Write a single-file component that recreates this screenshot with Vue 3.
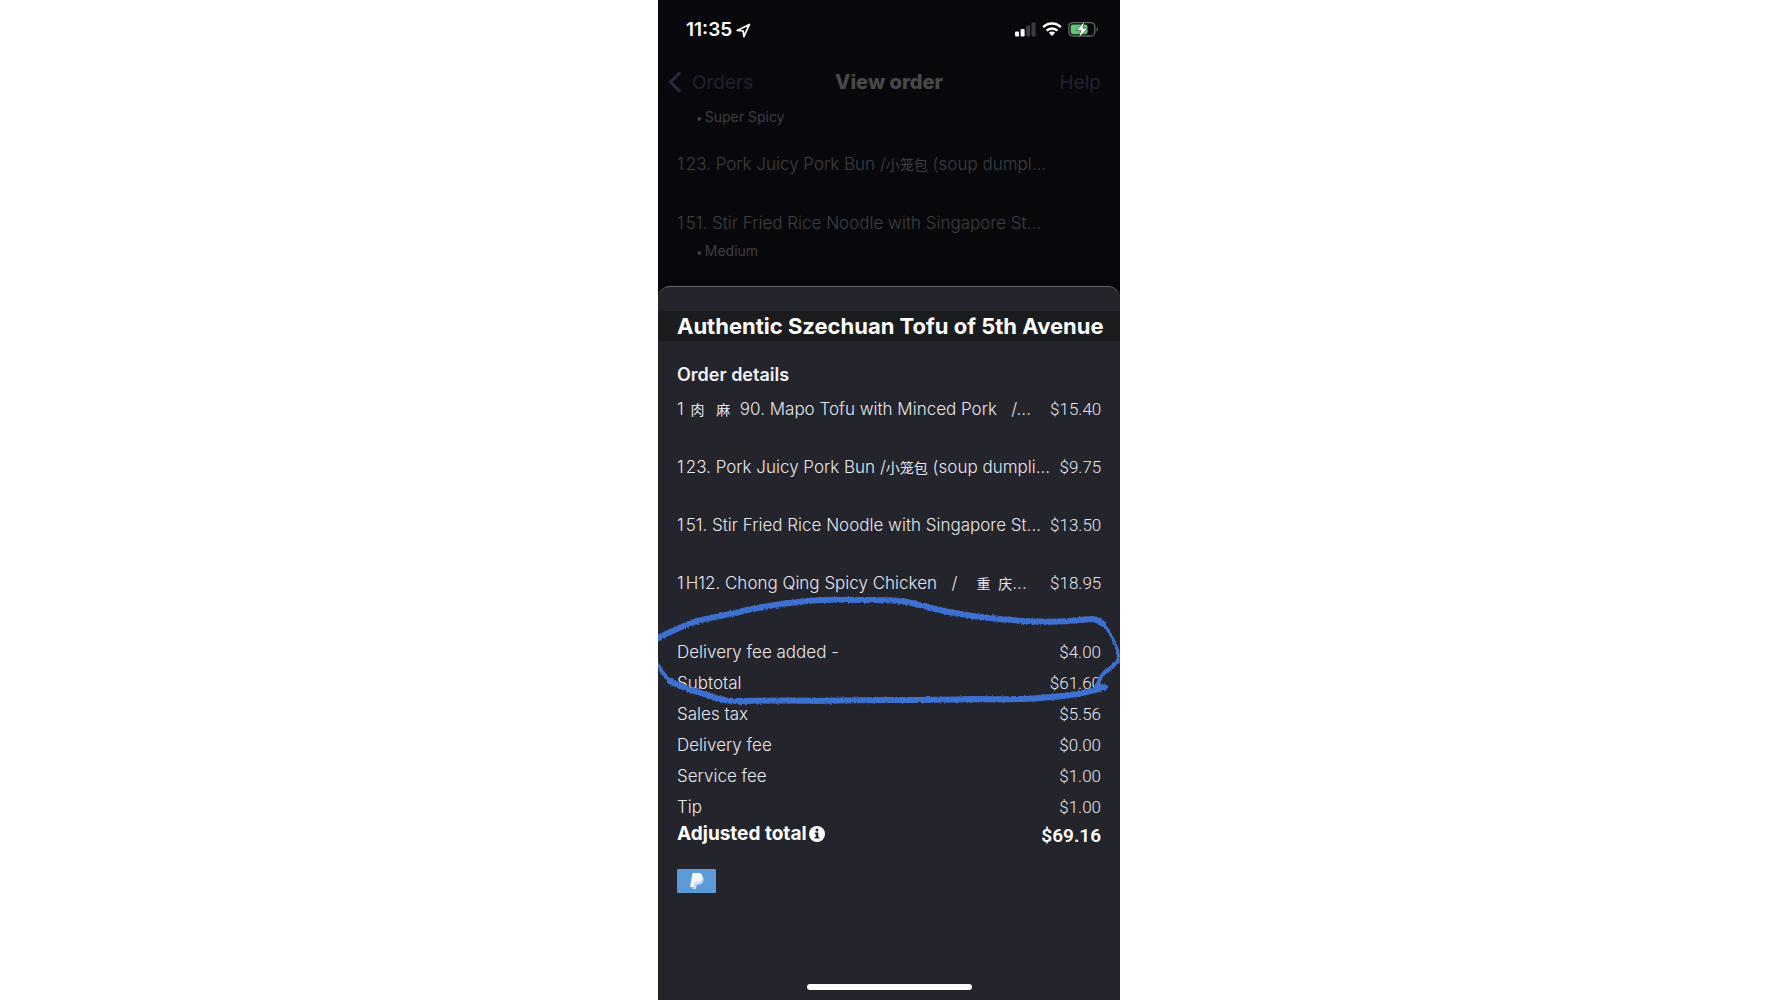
<script setup>
// Each name is a list of runs; `small` marks the ones set in the smaller size.
const soupBun = [{ text: '23. Pork Juicy Pork Bun /' }, { text: '小笼包', small: true }]
const noodle = [{ text: '51. Stir Fried Rice Noodle with Singapore St...' }]

const pastItems = [
  { qty: 1, name: [...soupBun, { text: ' (soup dumpl...' }] },
  { qty: 1, name: noodle, option: 'Medium' },
]

const items = [
  {
    qty: 1,
    name: [{ text: ' ' }, { text: '肉   麻', small: true }, { text: '  90. Mapo Tofu with Minced Pork   /...' }],
    price: '$15.40',
  },
  { qty: 1, name: [...soupBun, { text: ' (soup dumpli...' }], price: '$9.75' },
  { qty: 1, name: noodle, price: '$13.50' },
  {
    qty: 1,
    name: [{ text: 'H12. Chong Qing Spicy Chicken   /    ' }, { text: '重  庆', small: true }, { text: '...' }],
    price: '$18.95',
  },
]

const fees = [
  { label: 'Delivery fee added -', amount: '$4.00' },
  { label: 'Subtotal', amount: '$61.60' },
  { label: 'Sales tax', amount: '$5.56' },
  { label: 'Delivery fee', amount: '$0.00' },
  { label: 'Service fee', amount: '$1.00' },
  { label: 'Tip', amount: '$1.00' },
]
</script>

<template>
  <div class="stage">
    <main class="phone">
      <header class="status">
        <div class="clock">
          <span>11:35</span>
          <svg width="15" height="15" viewBox="0 0 15 15" aria-hidden="true">
            <path d="M1.2 7.4 13.4 1.4 7.9 13.6 7.2 8Z" fill="none" stroke="#fff" stroke-width="1.7" stroke-linejoin="round" />
          </svg>
        </div>
        <div class="indicators">
          <svg width="21" height="15" viewBox="0 0 21 15" aria-hidden="true">
            <rect x="0" y="9.5" width="4" height="5" rx="1.2" fill="#fff" />
            <rect x="5.6" y="7" width="4" height="7.5" rx="1.2" fill="#fff" />
            <rect x="11.2" y="3.6" width="4" height="10.9" rx="1.2" fill="#3b3b3f" />
            <rect x="16.6" y="0.5" width="4" height="14" rx="1.2" fill="#3b3b3f" />
          </svg>
          <svg width="20" height="15" viewBox="0 0 20 15" aria-hidden="true">
            <g fill="none" stroke="#fff" stroke-width="2.5">
              <path d="M1.2 5.2C6 .4 14 .4 18.8 5.2" />
              <path d="M4.6 8.7C7.6 5.8 12.4 5.8 15.4 8.7" />
            </g>
            <path d="M10 14 6.8 10.8C8.6 9.2 11.4 9.2 13.2 10.8Z" fill="#fff" />
          </svg>
          <svg width="31" height="17" viewBox="0 0 31 17" aria-hidden="true">
            <rect x="0.8" y="1.6" width="26" height="13.4" rx="4" fill="#08080c" stroke="#5d6a60" stroke-width="1.3" />
            <rect x="2.6" y="3.4" width="17" height="9.8" rx="2.4" fill="#5fc873" />
            <path d="M28.6 6.2c1.8.5 1.8 3.7 0 4.2Z" fill="#5d6a60" />
            <path d="M16.6.2 8.4 9.4h4.400l-2 7.400 9-9.600h-5Z" fill="#fff" stroke="#08080c" stroke-width=".5" />
          </svg>
        </div>
      </header>

      <nav class="bar">
        <a class="back" href="#orders">
          <svg width="14" height="22" viewBox="0 0 14 22" aria-hidden="true">
            <path d="M12 1.5 2.5 11 12 20.5" fill="none" stroke="#2b2a3d" stroke-width="3" />
          </svg>
          Orders
        </a>
        <h1>View order</h1>
        <a class="help" href="#help">Help</a>
      </nav>

      <section class="past">
        <p class="option"><span class="bullet">•</span>Super Spicy</p>
        <template v-for="(item, i) in pastItems" :key="i">
          <p class="dish"><span class="qty">{{ item.qty }}</span><span v-for="(run, r) in item.name" :key="r" :class="{ small: run.small }">{{ run.text }}</span></p>
          <p v-if="item.option" class="option"><span class="bullet">•</span>{{ item.option }}</p>
        </template>
      </section>

      <section class="sheet">
        <h2>Authentic Szechuan Tofu of 5th Avenue</h2>
        <h3>Order details</h3>
        <table class="items">
          <tbody>
            <tr v-for="item in items" :key="item.price">
              <th scope="row"><span class="qty">{{ item.qty }}</span><span v-for="(run, r) in item.name" :key="r" :class="{ small: run.small }">{{ run.text }}</span></th>
              <td>{{ item.price }}</td>
            </tr>
          </tbody>
        </table>

        <div class="summary">
          <table class="fees">
            <tbody>
              <tr v-for="fee in fees" :key="fee.label">
                <th scope="row">{{ fee.label }}</th>
                <td>{{ fee.amount }}</td>
              </tr>
            </tbody>
            <tfoot>
              <tr>
                <th scope="row">
                  <span class="total">Adjusted total<button type="button" aria-label="About the adjusted total">
                    <svg width="16" height="16" viewBox="0 0 16 16" aria-hidden="true">
                      <circle cx="8" cy="8" r="8" fill="#fff" />
                      <circle cx="8" cy="4" r="1.5" fill="#23242c" />
                      <path d="M5.8 6.6h3.5v4.4h1.1v1.6H5.6V11h1.2V8.2h-1Z" fill="#23242c" />
                    </svg>
                  </button></span>
                </th>
                <td>$69.16</td>
              </tr>
            </tfoot>
          </table>

          <svg class="marker" viewBox="0 0 462 120" preserveAspectRatio="none" aria-hidden="true">
            <defs>
              <filter id="crayon" x="-5%" y="-10%" width="110%" height="120%">
                <feTurbulence type="fractalNoise" baseFrequency="0.5" numOctaves="2" seed="4" />
                <feDisplacementMap in="SourceGraphic" scale="3" xChannelSelector="R" yChannelSelector="G" />
              </filter>
            </defs>
            <g fill="none" stroke="#3c70d0" stroke-linecap="round" stroke-linejoin="round" filter="url(#crayon)">
              <path stroke-width="6" d="M-2 49C10 43 22 37 36 32 52 27 72 25 89 20 108 16 128 13 149 11 170 9 195 10 215 10 230 10 240 10 249 12 260 14 271 18 282 20 293 23 304 24 315 26 332 28 348 30 365 31 382 32 398 32 412 31 420 30 428 29 435 29 440 30 443 32 445 34" />
              <path stroke-width="3" d="M444 32C450 39 455 49 457 54 460 59 461 66 460 70" />
              <path stroke-width="4" d="M460 70C456 76 452 79 447 82 444 85 442 88 441 91 440 94 439 95 438 97M-1 74C1 77 3 80 5 83 7 86 9 89 12 91" />
              <path stroke-width="6" d="M12 91C16 94 20 95 25 97 35 101 43 103 52 106 60 109 67 111 75 111 102 111 130 110 159 111 185 110 210 110 232 110 260 110 288 110 315 109 340 109 362 110 382 108 396 107 408 106 419 104 430 102 440 100 447 97" />
            </g>
          </svg>
        </div>

        <svg class="paypal" width="39" height="24" viewBox="0 0 39 24" role="img" aria-label="PayPal">
          <rect width="39" height="24" rx="1" fill="#5b9bd8" />
          <path d="M17 7h6c3 0 4 2 3.500 4.500-.6 3-3 4.200-5.500 4.200h-1.200L19 20h-3.500Z" fill="#c8daee" />
          <path d="M15.500 4H21c3.500 0 5 2 4.200 5-.7 3-3 4.300-5.700 4.300h-2L16.600 18H13Z" fill="#f4f8fc" />
        </svg>

        <div class="home"></div>
      </section>
    </main>
  </div>
</template>

<style>
body {
  margin: 0;
  background: #fff;
}
</style>

<style scoped>
.stage {
  display: flex;
  justify-content: center;
  font-family: Inter, "Noto Sans CJK SC", sans-serif;
}

.phone {
  display: flex;
  flex-direction: column;
  box-sizing: border-box;
  width: 100%;
  max-width: 462px;
  min-height: 100vh;
  background: #08080c;
  color: #e6e6ec;
  overflow: hidden;
}

h1,
h2,
h3,
p {
  margin: 0;
}

.status {
  display: flex;
  justify-content: space-between;
  align-items: center;
  height: 58px;
  padding: 0 21px 0 28px;
}

.clock {
  display: flex;
  align-items: center;
  gap: 4px;
  padding-top: 2px;
  color: #fff;
  font-size: 19px;
  font-weight: 600;
  line-height: 24px;
}

.indicators {
  display: flex;
  align-items: center;
  gap: 6px;
}

.bar {
  display: grid;
  grid-template-columns: 1fr auto 1fr;
  align-items: center;
  height: 48px;
  padding: 0 10px;
  font-size: 19px;
}

.bar a {
  color: #21202f;
  text-decoration: none;
}

.back {
  display: flex;
  align-items: center;
  gap: 10px;
}

.bar h1 {
  color: #48484b;
  font-size: 20px;
  font-weight: 800;
}

.bar .help {
  justify-self: end;
  padding-right: 9px;
}

.past {
  flex: none;
  height: 180px;
  padding: 0 19px;
  color: #3e3e42;
}

.option {
  padding-left: 19px;
  font-size: 14px;
  line-height: 22px;
}

.bullet {
  margin-right: 2px;
  font-size: 12px;
}

.dish {
  padding-top: 21px;
  font-size: 17px;
  font-weight: 300;
  line-height: 28px;
  white-space: pre;
}

.dish + .dish {
  padding-top: 30px;
}

.dish + .option {
  padding-top: 3px;
}

.qty {
  margin-right: 2px;
}

.sheet {
  flex: 1;
  display: flex;
  flex-direction: column;
  border-top: 1px solid #63636a;
  border-radius: 12px 12px 0 0;
  background: #23242c;
}

.sheet h2 {
  margin-top: 24px;
  padding: 0 19px;
  background: #1b1c1e;
  color: #fff;
  font-size: 22px;
  font-weight: 700;
  line-height: 30px;
  white-space: nowrap;
}

.sheet h3 {
  padding: 22px 19px 0;
  color: #f2f2f6;
  font-size: 18px;
  font-weight: 600;
  line-height: 24px;
}

table {
  width: 100%;
  border-collapse: collapse;
  font-size: 17px;
}

th,
td {
  padding: 0;
  font-weight: 300;
  text-align: left;
  vertical-align: top;
  white-space: pre;
}

th {
  padding-left: 19px;
}

td {
  padding-right: 19px;
  text-align: right;
  font-family: Roboto, sans-serif;
}

.items {
  margin-top: 7px;
  line-height: 30px;
}

.items tr {
  height: 58px;
}

.small {
  font-size: 14px;
  font-weight: 400;
}

.summary {
  position: relative;
  padding-top: 11px;
}

.fees tbody tr {
  height: 31px;
  line-height: 30px;
}

.fees tfoot th,
.fees tfoot td {
  color: #fff;
  font-size: 19px;
  font-weight: 600;
  line-height: 26px;
}

.fees tfoot th {
  font-weight: 700;
  line-height: 22px;
}

.total {
  display: flex;
  align-items: center;
  gap: 2px;
}

.total button {
  display: flex;
  padding: 0;
  border: 0;
  background: none;
}

.marker {
  position: absolute;
  top: -36px;
  left: 0;
  width: 100%;
  height: 120px;
  pointer-events: none;
}

.paypal {
  margin: 20px 19px 0;
}

.home {
  align-self: center;
  width: 165px;
  height: 6px;
  margin: auto 0 10px;
  border-radius: 3px;
  background: #fff;
}
</style>
